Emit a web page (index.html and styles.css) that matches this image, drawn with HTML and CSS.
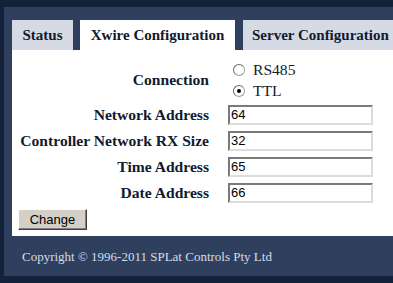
FILE: index.html
```html
<!DOCTYPE html>
<html>
<head>
<meta charset="utf-8">
<link rel="stylesheet" href="styles.css">
</head>
<body>
<div class="panel">
  <div class="tabs">
    <div class="tab tab-status">Status</div>
    <div class="tab tab-active tab-xwire">Xwire Configuration</div>
    <div class="tab tab-server">Server Configuration</div>
  </div>
  <div class="content">
    <div class="form">
      <div class="label label-conn">Connection</div>
      <div class="radios">
        <label class="radio"><span class="dot"></span>RS485</label>
        <label class="radio"><span class="dot dot-on"></span>TTL</label>
      </div>
      <div class="label">Network Address</div>
      <div class="field"><div class="input">64</div></div>
      <div class="label">Controller Network RX Size</div>
      <div class="field"><div class="input">32</div></div>
      <div class="label">Time Address</div>
      <div class="field"><div class="input">65</div></div>
      <div class="label">Date Address</div>
      <div class="field"><div class="input">66</div></div>
    </div>
    <div class="actions"><div class="button">Change</div></div>
  </div>
  <div class="footer">Copyright © 1996-2011 SPLat Controls Pty Ltd</div>
</div>
</body>
</html>
```
FILE: styles.css
```css
html, body {
  margin: 0;
  padding: 0;
}
body {
  background: #14213a;
  width: 393px;
  height: 283px;
  overflow: hidden;
  font-family: "Liberation Serif", "Times New Roman", serif;
}
.panel {
  margin: 7px 0 0 4px;
  width: 430px;
  height: 269px;
  background: #2f405e;
  padding: 13px 0 0 8px;
  box-sizing: border-box;
}
.tabs {
  display: flex;
  height: 30px;
}
.tab {
  background: #d5dae5;
  color: #101a30;
  font-weight: bold;
  font-size: 15px;
  line-height: 30px;
  text-align: center;
  box-sizing: border-box;
}
.tab-status { width: 61px; }
.tab-xwire { width: 155px; margin-left: 7px; background: #ffffff; }
.tab-server { width: 170px; margin-left: 8px; text-align: left; padding-left: 9px; }
.content {
  background: #ffffff;
  height: 186px;
  padding: 0 0 0 6px;
  box-sizing: border-box;
  display: flex;
  flex-direction: column;
}
.form {
  display: grid;
  grid-template-columns: 188px 145px;
  column-gap: 19px;
  margin-left: 3px;
  padding-top: 8px;
  color: #101a30;
}
.label {
  font-family: "Liberation Serif", "Times New Roman", serif;
  font-weight: bold;
  font-size: 15.6px;
  text-align: right;
  display: flex;
  align-items: center;
  justify-content: flex-end;
  height: 26px;
  white-space: nowrap;
}
.label-conn {
  height: 44px;
}
.radios {
  display: flex;
  flex-direction: column;
  justify-content: center;
  padding-left: 5px;
  height: 44px;
}
.radio {
  display: flex;
  align-items: center;
  font-size: 15.6px;
  height: 21px;
  color: #101a30;
}
.dot {
  width: 12px;
  height: 12px;
  border-radius: 50%;
  border: 1px solid #a0a0a0;
  border-top-color: #6a6a6a;
  border-left-color: #6a6a6a;
  background: #ffffff;
  margin-right: 8px;
  box-sizing: border-box;
  position: relative;
}
.dot-on::after {
  content: "";
  position: absolute;
  left: 3px;
  top: 3px;
  width: 4px;
  height: 4px;
  border-radius: 50%;
  background: #000000;
}
.field {
  height: 26px;
  display: flex;
  align-items: center;
}
.input {
  width: 145px;
  height: 20px;
  box-sizing: border-box;
  border: 2px solid #dcdcdc;
  border-top-color: #7a7a7a;
  border-left-color: #7a7a7a;
  font-family: "Liberation Sans", Arial, sans-serif;
  font-size: 13px;
  line-height: 16px;
  padding-left: 1px;
  color: #000;
}
.actions {
  margin-top: 3px;
}
.button {
  display: inline-block;
  width: 69px;
  height: 21px;
  box-sizing: border-box;
  background: #d4d0c8;
  border: 1px solid;
  border-color: #ffffff #404040 #404040 #ffffff;
  box-shadow: inset -1px -1px 0 #808080;
  font-family: "Liberation Sans", Arial, sans-serif;
  font-size: 13px;
  line-height: 19px;
  text-align: center;
  color: #000;
}
.footer {
  color: #d5dcea;
  font-size: 13px;
  padding: 13px 0 0 10px;
}
```
